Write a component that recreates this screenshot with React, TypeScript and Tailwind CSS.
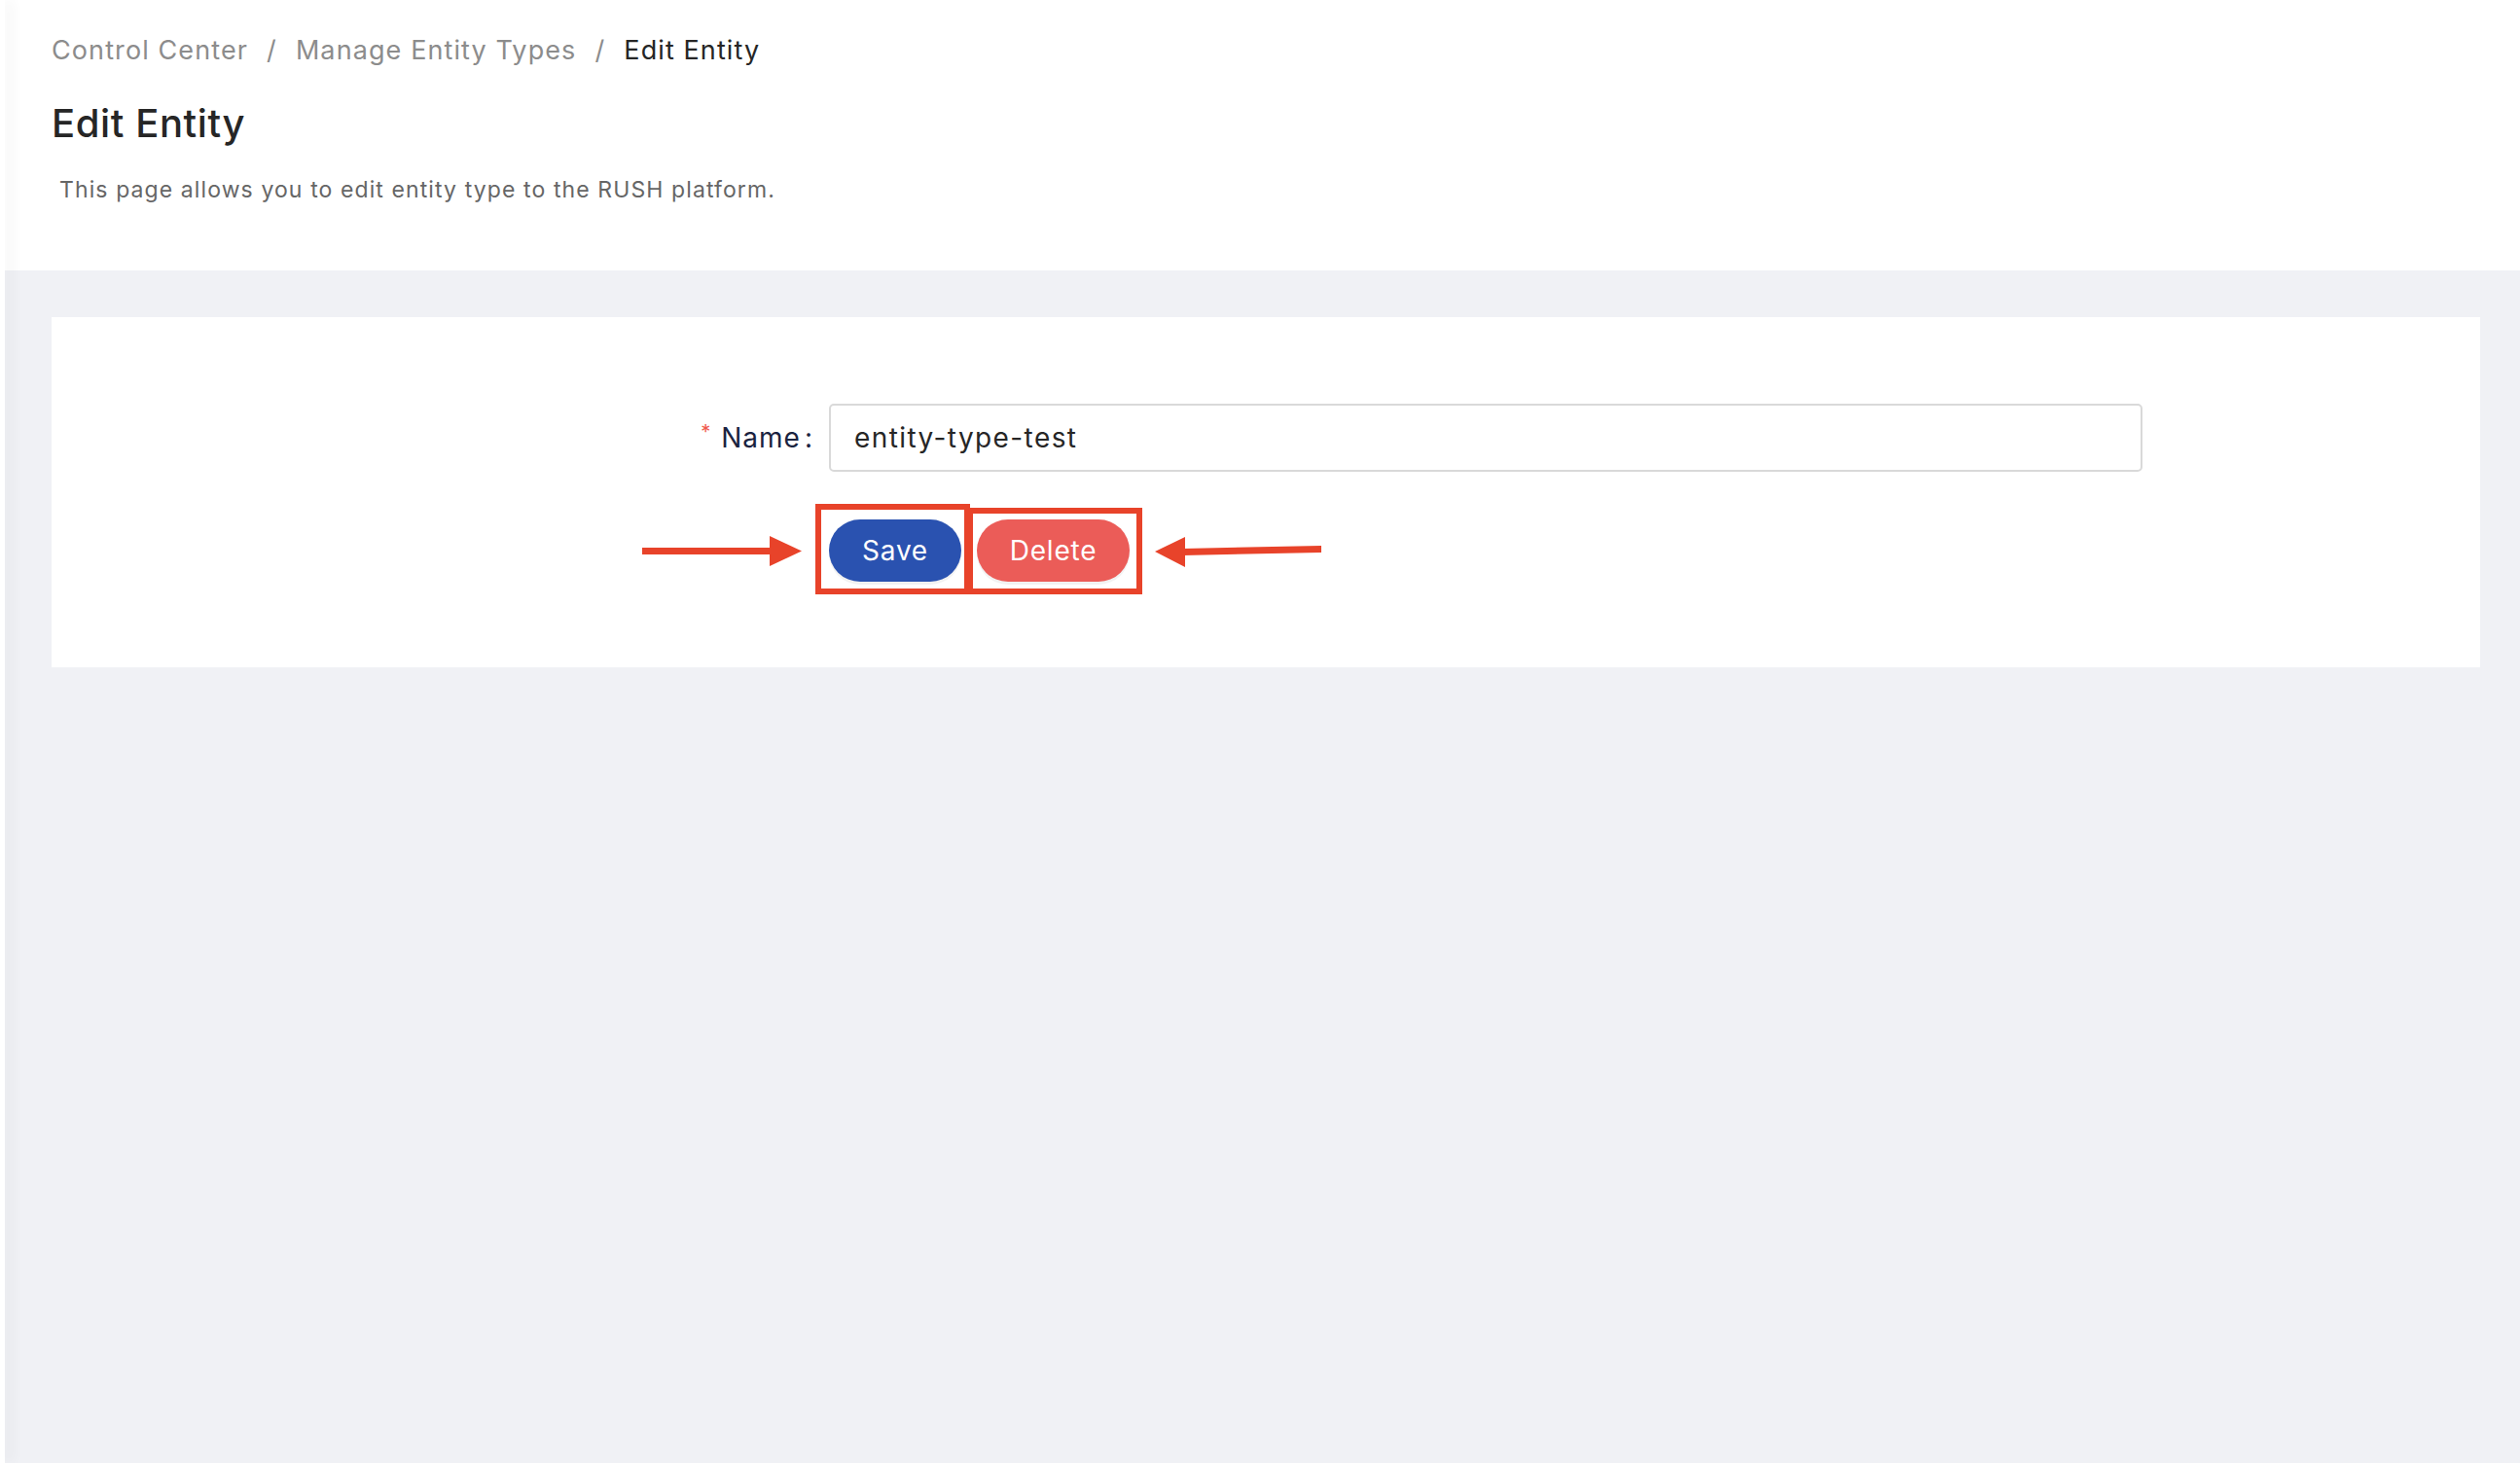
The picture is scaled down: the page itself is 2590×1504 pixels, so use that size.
import React, { useState } from 'react';

const font = { fontFamily: 'Inter, "Open Sans", sans-serif' };

const ArrowRight: React.FC = () => (
  <svg width="164" height="32" viewBox="0 0 164 32" className="absolute left-[-192px] top-[16px]">
    <rect x="0" y="13" width="134" height="7" fill="#e8432a" />
    <polygon points="131,1 164,16.5 131,32" fill="#e8432a" />
  </svg>
);

const ArrowLeft: React.FC = () => (
  <svg width="171" height="32" viewBox="0 0 171 32" className="absolute left-[335px] top-[17px]">
    <polygon points="28,13 171,10 171,17 28,20" fill="#e8432a" />
    <polygon points="0,16 31,1 31,32" fill="#e8432a" />
  </svg>
);

const Breadcrumb: React.FC<{ items: string[] }> = ({ items }) => (
  <nav className="flex items-center text-[27px] leading-[38px] tracking-[1.1px]">
    {items.map((item, i) => {
      const last = i === items.length - 1;
      return (
        <React.Fragment key={item}>
          <span className={last ? 'text-[#262626]' : 'text-[#8c8c8c]'}>{item}</span>
          {!last && <span className="mx-[19px] text-[#8c8c8c]">/</span>}
        </React.Fragment>
      );
    })}
  </nav>
);

export default function App() {
  const [name, setName] = useState('entity-type-test');

  return (
    <div className="flex min-h-[1504px] w-full bg-white" style={font}>
      <aside className="relative z-10 w-[5px] shrink-0 bg-white shadow-[6px_0_14px_rgba(0,0,0,0.07)]" />
      <div className="flex flex-1 flex-col">
        <header className="h-[278px] bg-white pl-12 pt-[33px]">
          <Breadcrumb items={['Control Center', 'Manage Entity Types', 'Edit Entity']} />
          <h1 className="mt-[32px] text-[40px] font-medium leading-[48px] tracking-[0.6px] text-[#262626]">Edit Entity</h1>
          <p className="mt-[28px] pl-2 text-[23px] leading-[32px] tracking-[1.1px] text-[#666]">
            This page allows you to edit entity type to the RUSH platform.
          </p>
        </header>

        <main className="flex-1 bg-[#f0f1f5] pl-12 pr-[41px] pt-12">
          <section className="bg-white pb-[88px] pt-[89px]">
            <div className="flex items-start">
              <label className="flex h-[70px] w-[799px] shrink-0 items-center justify-end pr-[16px] text-[28px] tracking-[1px] text-[#1a2340]">
                <span className="mr-[10px] self-start pt-[19px] text-[20px] leading-none text-[#f0584c]">*</span>
                Name<span className="ml-[4px]">:</span>
              </label>
              <input
                value={name}
                onChange={e => setName(e.target.value)}
                className="h-[70px] w-[1350px] rounded-[5px] border-2 border-[#d9d9d9] pl-[24px] text-[28px] tracking-[1.4px] text-[#262626] outline-none"
                style={font}
              />
            </div>

            <div className="mt-[49px] flex pl-[799px]">
              <div className="relative flex gap-4">
                <button className="h-[64px] w-[136px] rounded-full bg-[#2a52b0] text-[28px] tracking-[0.8px] text-white shadow-[0_3px_0_rgba(0,0,0,0.05)]">
                  Save
                </button>
                <button className="h-[64px] w-[157px] rounded-full bg-[#eb5c58] text-[28px] tracking-[0.8px] text-white shadow-[0_3px_0_rgba(0,0,0,0.05)]">
                  Delete
                </button>
                <div className="pointer-events-none absolute left-[-14px] top-[-16px] h-[93px] w-[159px] border-[6px] border-[#e8432a]" />
                <div className="pointer-events-none absolute left-[142px] top-[-12px] h-[89px] w-[180px] border-[6px] border-[#e8432a]" />
                <ArrowRight />
                <ArrowLeft />
              </div>
            </div>
          </section>
        </main>
      </div>
    </div>
  );
}
